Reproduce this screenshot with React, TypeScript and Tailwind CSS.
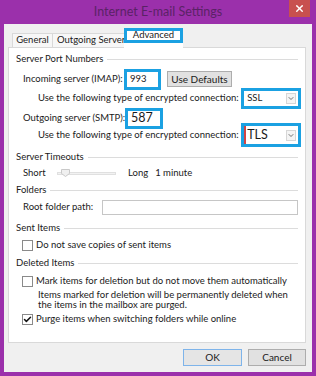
import { Check, ChevronDown, X } from "lucide-react";

const font = { fontFamily: "Lato, 'Noto Sans', sans-serif" };

function GroupTitle({ title }: { title: string }) {
  return (
    <div className="flex h-[14px] items-center gap-[4px]">
      <span>{title}</span>
      <div className="h-px flex-1 bg-[#dcdcdc]" />
    </div>
  );
}

function CheckBox({ checked, label }: { checked?: boolean; label: string }) {
  return (
    <div className="flex h-[14px] items-center gap-[3px] pl-[6px]">
      <div className="flex h-[11px] w-[11px] items-center justify-center border border-[#8a8a8a] bg-white">
        {checked && <Check size={9} strokeWidth={4} className="text-[#111]" />}
      </div>
      <span>{label}</span>
    </div>
  );
}

function Combo({ value, big, red }: { value: string; big?: boolean; red?: boolean }) {
  return (
    <div
      className={`flex w-[54px] items-center justify-between bg-white pr-[2px] outline-[3px] outline-solid outline-[#1ba1e2] ${
        big ? "h-[18px] text-[12.5px]" : "h-[15px] text-[9.5px]"
      } ${red ? "border-l-2 border-[#d04545] pl-[1px]" : "pl-[3px]"}`}
    >
      <span>{value}</span>
      <div className="flex h-[11px] w-[10px] items-center justify-center border border-[#d6d6d6] bg-[#f4f4f4]">
        <ChevronDown size={9} strokeWidth={2.5} className="text-[#555]" />
      </div>
    </div>
  );
}

export default function App() {
  return (
    <div className="flex h-[376px] w-[316px] flex-col bg-[#9b30ab] text-[9.5px] text-[#1a1a1a]" style={font}>
      {/* title bar */}
      <div className="grid h-[24px] grid-cols-[1fr_auto_1fr] items-start">
        <div />
        <div className="pt-[5px] text-[12.5px] leading-[14px] text-[#5a2266]">Internet E-mail Settings</div>
        <div className="flex justify-end pr-[6px]">
          <div className="flex h-[17px] w-[21px] items-center justify-center bg-[#c8504f]">
            <X size={11} strokeWidth={3} className="text-white" />
          </div>
        </div>
      </div>

      {/* client area */}
      <div className="mx-[4px] mb-[4px] flex flex-1 flex-col bg-[#f0f0f0]">
        {/* tabs */}
        <div className="relative z-10 -mb-px flex items-end pl-[8px] pt-[4px]">
          <div className="flex h-[15px] w-[40px] items-center justify-center border border-r-0 border-[#d9d9d9] bg-[#f7f7f7]">
            General
          </div>
          <div className="flex h-[15px] w-[72px] items-center overflow-hidden whitespace-nowrap border border-r-0 border-[#d9d9d9] bg-[#f7f7f7] pl-[4px]">
            Outgoing Server
          </div>
          <div className="flex w-[59px] flex-col">
            <div className="flex h-[15px] items-end justify-center border-[3px] border-[#1ba1e2] bg-white leading-[10px]">
              Advanced
            </div>
            <div className="h-[5px] bg-white" />
          </div>
        </div>

        {/* tab page */}
        <div className="ml-[4px] h-[296px] w-[298px] border border-[#d9d9d9] bg-white px-[7px] pt-[4px]">
          <GroupTitle title="Server Port Numbers" />

          <div className="mt-[6px] flex h-[14px] items-center pl-[7px]">
            <span className="w-[104px]">Incoming server (IMAP):</span>
            <div className="flex h-[15px] w-[31px] items-center bg-white pl-[3px] outline-[3px] outline-solid outline-[#1ba1e2]">
              993
            </div>
            <button className="ml-[9px] flex h-[16px] w-[65px] items-center justify-center border border-[#adadad] bg-[#e1e1e1] text-[10px]">
              Use Defaults
            </button>
          </div>

          <div className="mt-[5px] flex h-[14px] items-center pl-[22px]">
            <span className="w-[207px]">Use the following type of encrypted connection:</span>
            <Combo value="SSL" />
          </div>

          <div className="mt-[6px] flex h-[14px] items-center pl-[7px]">
            <span className="w-[105px]">Outgoing server (SMTP):</span>
            <div className="flex h-[15px] w-[32px] items-center bg-white pl-[3px] text-[12.5px] outline-[3px] outline-solid outline-[#1ba1e2]">
              587
            </div>
          </div>

          <div className="mt-[3px] flex h-[14px] items-center pl-[22px]">
            <span className="w-[207px]">Use the following type of encrypted connection:</span>
            <Combo value="TLS" big red />
          </div>

          <div className="mt-[8px]">
            <GroupTitle title="Server Timeouts" />
          </div>
          <div className="mt-[2px] flex h-[14px] items-center pl-[7px]">
            <span className="w-[34px]">Short</span>
            <div className="flex h-[10px] w-[59px] items-center">
              <div className="h-[3px] w-full border border-[#e0e0e0] bg-[#f2f2f2]" />
              <svg width="9" height="8" viewBox="0 0 9 8" className="-ml-[55px]">
                <path d="M0.5 0.5 H8.5 V4.5 L4.5 7.5 L0.5 4.5 Z" fill="#f0f0f0" stroke="#c9c9c9" />
              </svg>
            </div>
            <span className="ml-[12px]">Long</span>
            <span className="ml-[7px]">1 minute</span>
          </div>

          <div className="mt-[3px]">
            <GroupTitle title="Folders" />
          </div>
          <div className="mt-[3px] flex h-[14px] items-center pl-[7px]">
            <span className="w-[79px]">Root folder path:</span>
            <div className="h-[15px] flex-1 border border-[#c6c6c6] bg-white" />
          </div>

          <div className="mt-[7px]">
            <GroupTitle title="Sent Items" />
          </div>
          <div className="mt-[3px]">
            <CheckBox label="Do not save copies of sent items" />
          </div>

          <div className="mt-[4px]">
            <GroupTitle title="Deleted Items" />
          </div>
          <div className="mt-[4px]">
            <CheckBox label="Mark items for deletion but do not move them automatically" />
          </div>
          <p className="mt-[2px] pl-[22px] leading-[9.5px]">
            Items marked for deletion will be permanently deleted when
            <br />
            the items in the mailbox are purged.
          </p>
          <div className="mt-[3px]">
            <CheckBox checked label="Purge items when switching folders while online" />
          </div>
        </div>

        {/* buttons */}
        <div className="mt-[6px] flex justify-end gap-[6px] pr-[6px]">
          <button className="flex h-[17px] w-[59px] items-center justify-center border border-[#7eb4ea] bg-[#e5e5e5] text-[10px]">
            OK
          </button>
          <button className="flex h-[17px] w-[58px] items-center justify-center border border-[#adadad] bg-[#e1e1e1] text-[10px]">
            Cancel
          </button>
        </div>
      </div>
    </div>
  );
}
